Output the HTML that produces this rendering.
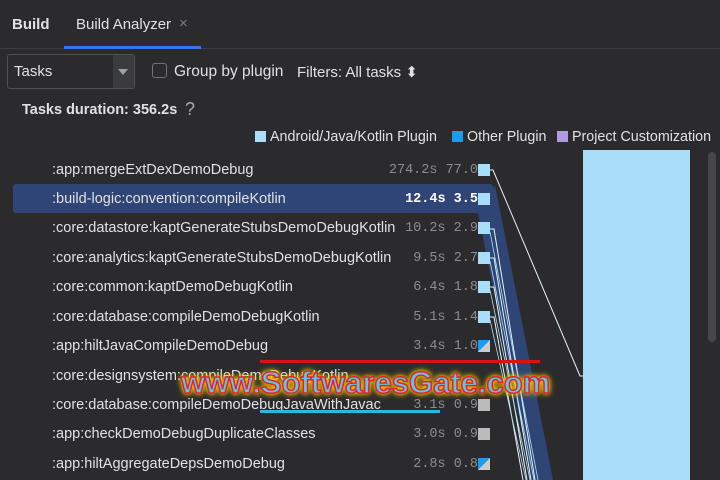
<!DOCTYPE html>
<html><head><meta charset="utf-8"><style>
*{margin:0;padding:0;box-sizing:border-box}
body{width:720px;height:480px;overflow:hidden;background:#2b2b2d;font-family:"Liberation Sans",sans-serif;color:#dfe1e5;position:relative}
.a{position:absolute;white-space:nowrap}
.row{position:absolute;left:52px;font-size:14.5px;color:#dfe1e5}
.d{position:absolute;font-family:"Liberation Mono",monospace;font-size:13.5px;color:#8a8c90;width:90px;text-align:right;left:388px}
.sq{position:absolute;left:478px;width:12px;height:12px;background:#a8defa}
</style></head><body>
<div class="a" style="left:0;top:0;width:720px;height:49px;background:#2b2b2d;border-bottom:1px solid #3c3d40"></div>
<div class="a" style="left:12px;top:16px;font-size:15px;font-weight:bold">Build</div>
<div class="a" style="left:76px;top:16px;font-size:15px">Build Analyzer</div>
<div class="a" style="left:179px;top:15px;font-size:15px;color:#7c7e82">×</div>
<div class="a" style="left:64px;top:46px;width:137px;height:3px;background:#3574f0"></div>
<div class="a" style="left:7px;top:54px;width:128px;height:35px;border:1px solid #4e5055;border-radius:3px;background:#2b2b2d"></div>
<div class="a" style="left:113px;top:55px;width:21px;height:33px;background:#393b3f"></div>
<div class="a" style="left:118px;top:69px;width:0;height:0;border-left:5px solid transparent;border-right:5px solid transparent;border-top:6px solid #9da0a6"></div>
<div class="a" style="left:14px;top:63px;font-size:15px">Tasks</div>
<div class="a" style="left:152px;top:63px;width:15px;height:15px;border:1px solid #6f737a;border-radius:3px"></div>
<div class="a" style="left:174px;top:63px;font-size:15.5px">Group by plugin</div>
<div class="a" style="left:297px;top:63px;font-size:15px">Filters: All tasks ⬍</div>
<div class="a" style="left:22px;top:102px;font-size:14.5px;font-weight:bold">Tasks duration: 356.2s</div>
<div class="a" style="left:185px;top:99px;font-size:18px;color:#aaa">?</div>
<div class="a" style="left:255px;top:131px;width:11px;height:11px;background:#a8defa"></div>
<div class="a" style="left:270px;top:129px;font-size:14.3px">Android/Java/Kotlin Plugin</div>
<div class="a" style="left:452px;top:131px;width:11px;height:11px;background:#1c9cf0"></div>
<div class="a" style="left:467px;top:129px;font-size:14.3px">Other Plugin</div>
<div class="a" style="left:557px;top:131px;width:11px;height:11px;background:#b09ae0"></div>
<div class="a" style="left:572px;top:129px;font-size:14.3px">Project Customization</div>
<svg class="a" style="left:0;top:0" width="720" height="480">
<polygon points="478,213 495,185 553,480 532,480" fill="#2f4575"/>
<rect x="13" y="184" width="480" height="29" rx="3" fill="#2f4575"/>
<rect x="583" y="150" width="107" height="330" fill="#a8defa"/>
<rect x="708" y="152" width="8" height="190" rx="4" fill="#45474b"/>
<g fill="none" stroke="#e8f4fb" stroke-width="1">
<polyline points="490,170 493,170 580,376 583,376"/>
<polyline points="490,229 494,229 535,480"/>
<polyline points="490,258 494,258 531,480"/>
<polyline points="490,287 494,287 527,480"/>
<polyline points="490,317 494,317 523,480"/>
</g>
<g stroke="#a8defa" stroke-width="0.8" fill="none">
<line x1="490" y1="232" x2="538" y2="480"/><line x1="490" y1="261" x2="534" y2="480"/>
<line x1="490" y1="290" x2="530" y2="480"/><line x1="490" y1="320" x2="526" y2="480"/>
</g>
</svg>
<div class="row" style="top:162px">:app:mergeExtDexDemoDebug</div>
<div class="row" style="top:191px">:build-logic:convention:compileKotlin</div>
<div class="row" style="top:220px">:core:datastore:kaptGenerateStubsDemoDebugKotlin</div>
<div class="row" style="top:250px">:core:analytics:kaptGenerateStubsDemoDebugKotlin</div>
<div class="row" style="top:279px">:core:common:kaptDemoDebugKotlin</div>
<div class="row" style="top:309px">:core:database:compileDemoDebugKotlin</div>
<div class="row" style="top:338px">:app:hiltJavaCompileDemoDebug</div>
<div class="row" style="top:368px">:core:designsystem:compileDemoDebugKotlin</div>
<div class="row" style="top:397px">:core:database:compileDemoDebugJavaWithJavac</div>
<div class="row" style="top:426px">:app:checkDemoDebugDuplicateClasses</div>
<div class="row" style="top:456px">:app:hiltAggregateDepsDemoDebug</div>
<div class="d" style="top:163px">274.2s 77.0</div>
<div class="d" style="top:192px;color:#fff;font-weight:bold">12.4s  3.5</div>
<div class="d" style="top:221px">10.2s  2.9</div>
<div class="d" style="top:251px">9.5s  2.7</div>
<div class="d" style="top:280px">6.4s  1.8</div>
<div class="d" style="top:310px">5.1s  1.4</div>
<div class="d" style="top:339px">3.4s  1.0</div>
<div class="d" style="top:398px">3.1s  0.9</div>
<div class="d" style="top:427px">3.0s  0.9</div>
<div class="d" style="top:457px">2.8s  0.8</div>
<div class="sq" style="top:164px"></div><div class="sq" style="top:193px"></div><div class="sq" style="top:222px"></div>
<div class="sq" style="top:252px"></div><div class="sq" style="top:281px"></div><div class="sq" style="top:311px"></div>
<div class="sq" style="top:340px;background:linear-gradient(135deg,#1c9cf0 50%,#ccc 50%)"></div>
<div class="sq" style="top:399px;background:#bbb"></div>
<div class="sq" style="top:428px;background:#bbb"></div>
<div class="sq" style="top:458px;background:linear-gradient(135deg,#1c9cf0 50%,#ccc 50%)"></div>
<div class="a" style="left:260px;top:360px;width:280px;height:3px;background:#e01010"></div>
<div class="a" style="left:260px;top:410px;width:180px;height:3px;background:#2ab8e0"></div>
<div class="a" style="left:181px;top:365px;font-size:31px;font-weight:bold;color:#5cc6f0;-webkit-text-stroke:1.5px #e8202a;text-shadow:0 0 4px #ffd200,0 0 6px #ffd200,0 0 8px #c8a000">www.SoftwaresGate.com</div>
</body></html>
